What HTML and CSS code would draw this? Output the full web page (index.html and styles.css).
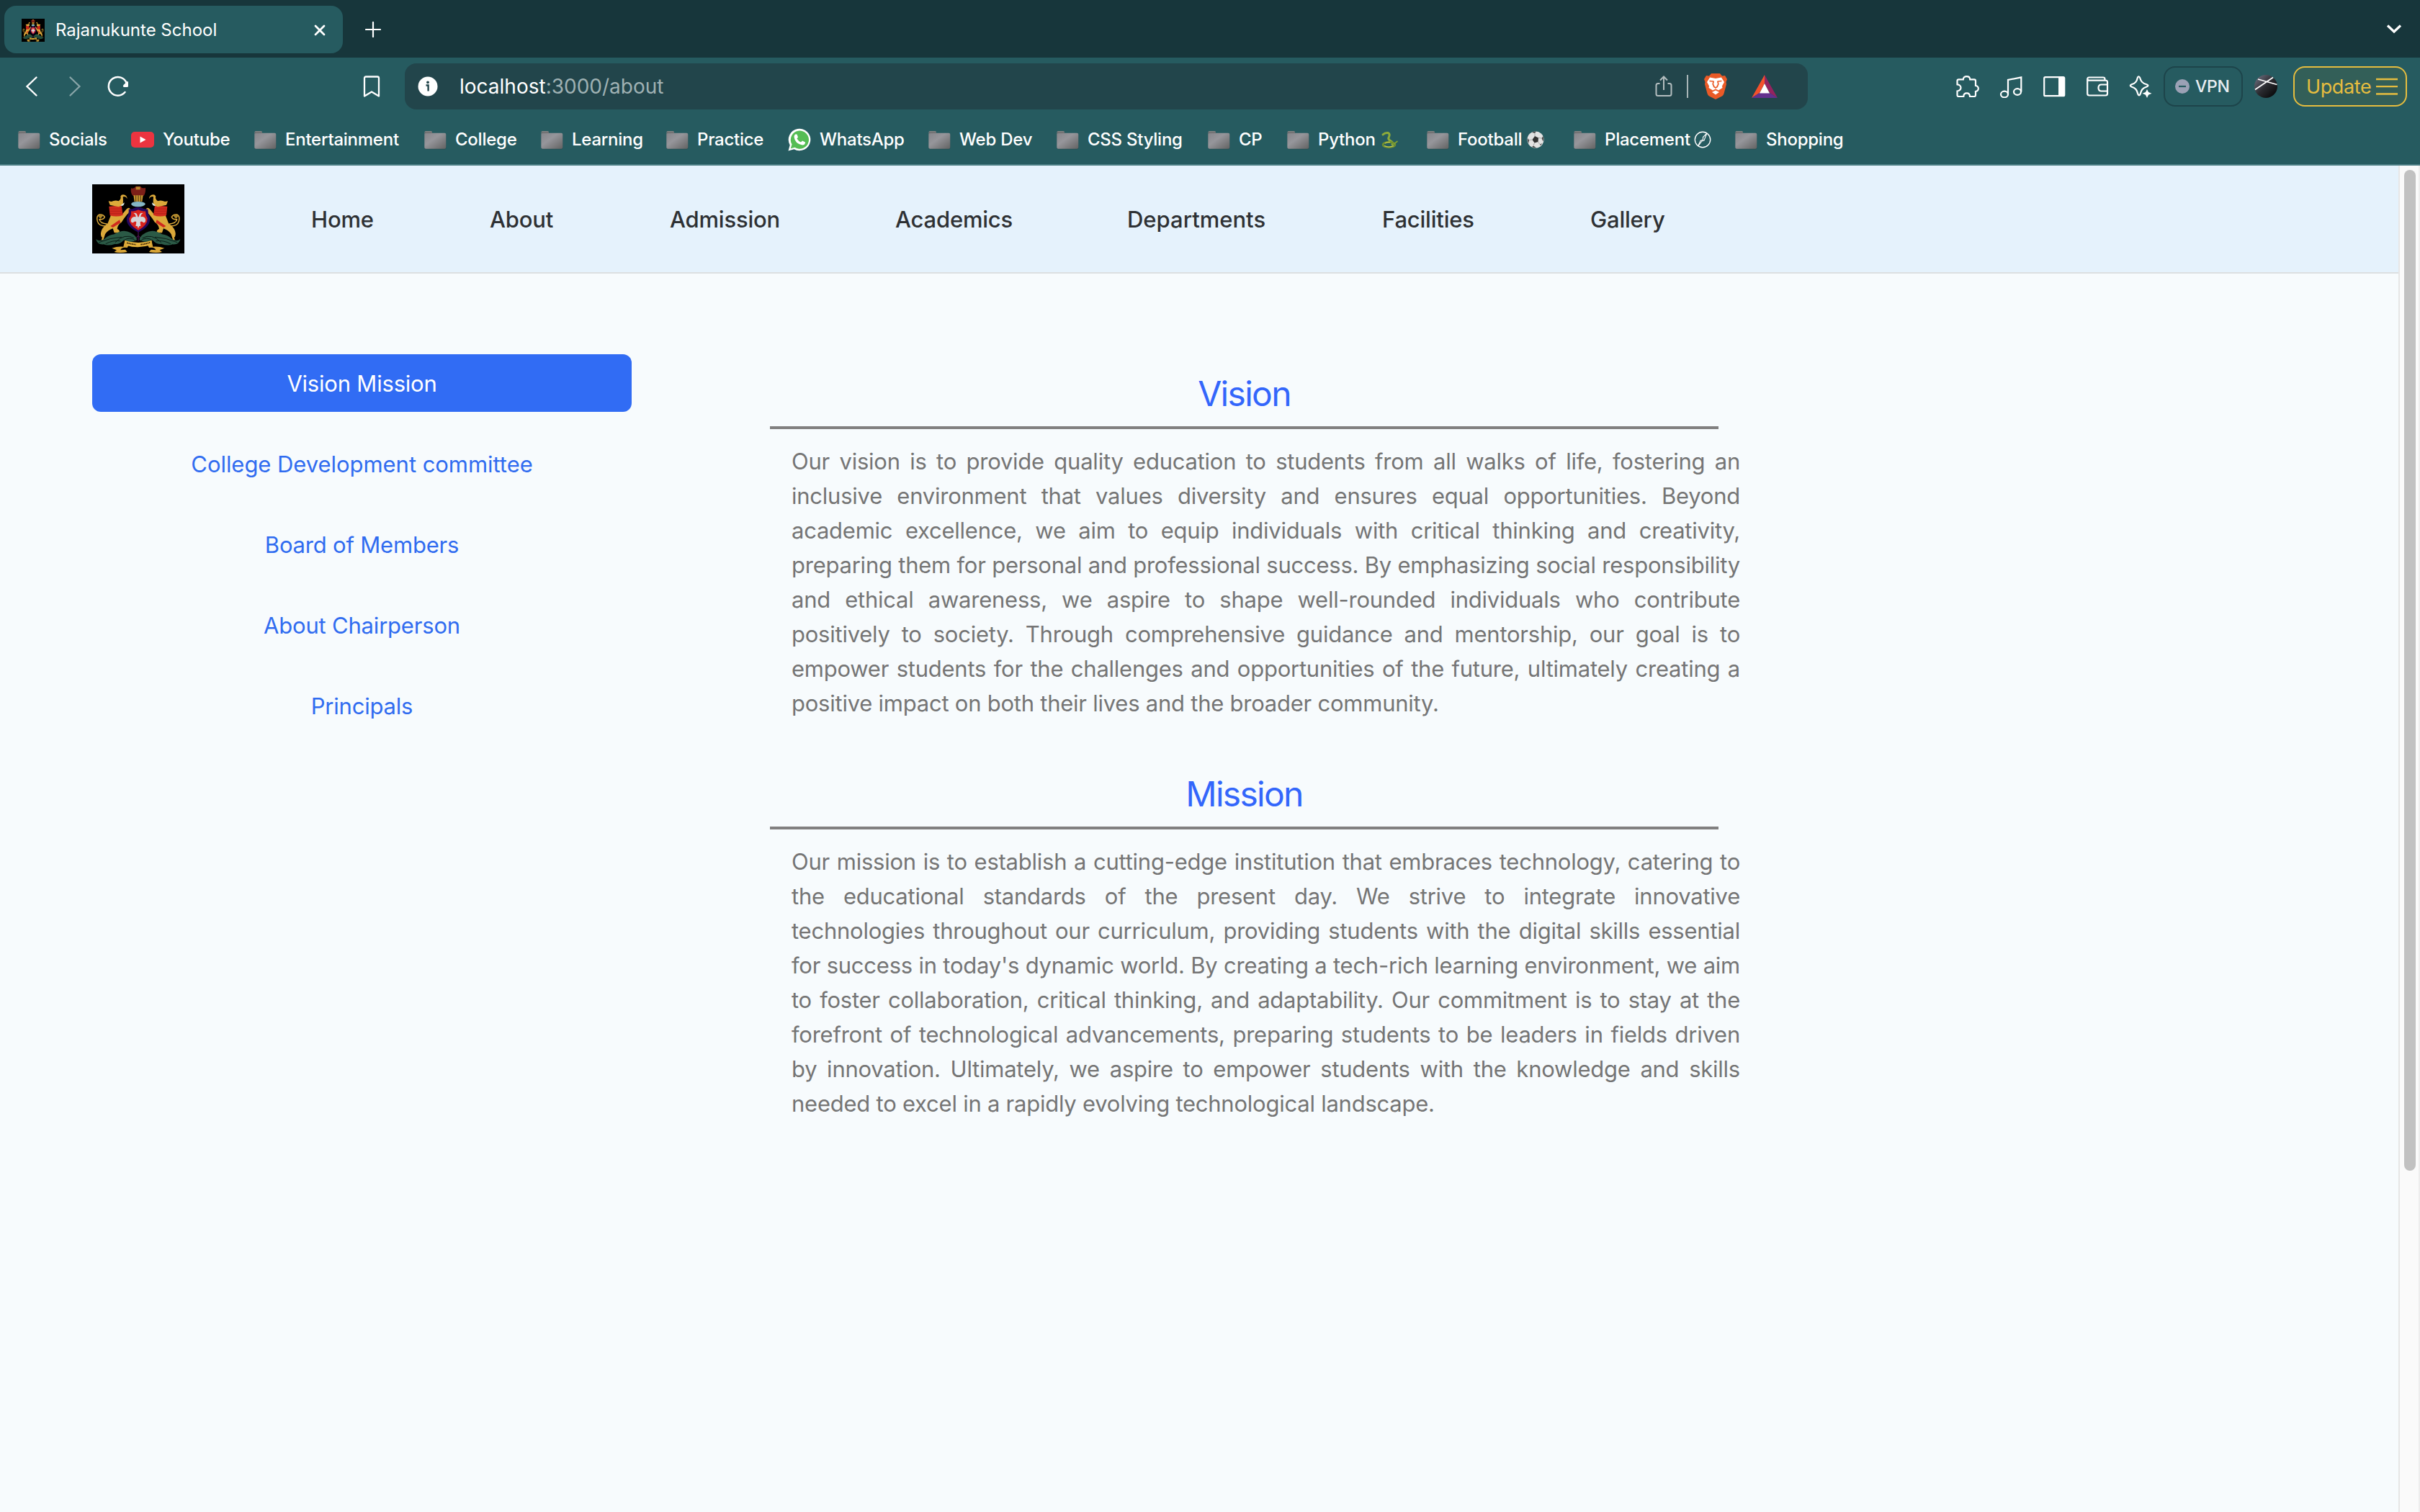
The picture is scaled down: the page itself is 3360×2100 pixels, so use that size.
FILE: index.html
```html
<!DOCTYPE html>
<html lang="en">
<head>
<meta charset="utf-8">
<title>Rajanukunte School</title>
<link rel="stylesheet" href="styles.css">
</head>
<body>
<svg class="defs" width="0" height="0">
  <defs>
    <linearGradient id="folderFill" x1="0" y1="0" x2="1" y2="1">
      <stop offset="0" stop-color="#86868b"/><stop offset=".4" stop-color="#96969b"/><stop offset="1" stop-color="#626262"/>
    </linearGradient>
    <linearGradient id="avatarFill" x1="0" y1="0" x2="1" y2="1">
      <stop offset="0" stop-color="#77788a"/><stop offset=".5" stop-color="#2a2b30"/><stop offset="1" stop-color="#000"/>
    </linearGradient>
    <symbol id="folder" viewBox="0 0 32 32">
      <path d="M1.5 9V5.5Q1.5 4 3 4H10.500Q12 4 12 5.500V9Z" fill="#7f7f80"/>
      <path d="M2 6H12V8H2Z" fill="#5c5c5c"/>
      <rect x="1.300" y="7" width="30" height="22.500" rx="2" fill="#1f4c50"/>
      <rect x="1.300" y="6.800" width="30" height="22" rx="2" fill="url(#folderFill)"/>
    </symbol>
    <symbol id="beast" viewBox="54 48 384 288" overflow="visible">
      <path d="M96 270Q86 262 92 242Q98 224 118 212L132 176L180 172L196 152Q206 142 212 150L214 158Q200 172 188 188L176 206Q160 216 158 234Q172 240 166 250H146L140 232Q118 240 108 256Q104 270 100 280H92Z" fill="#dca93a"/>
      <path d="M124 140L176 136L182 176Q158 186 128 178Z" fill="#cf2a1e"/>
      <path d="M127 150H178M128 160H180M129 170H181" stroke="#a31a14" stroke-width="1.500"/>
      <path d="M122 118L134 120Q150 112 164 118Q176 108 172 98Q176 88 190 92Q200 98 200 108Q194 96 182 100Q184 118 182 134L164 142L128 134Z" fill="#dca93a"/>
      <path d="M172 136L188 124Q188 136 178 138Z" fill="#d9e6e6"/>
      <path d="M130 222L168 196L172 208L140 228Z" fill="#cf2a1e"/>
      <path d="M118 222Q82 224 76 202Q70 180 84 174Q100 172 106 184Q102 196 84 194Q86 210 118 214" fill="none" stroke="#dca93a" stroke-width="4.500"/>
      <path d="M78 180Q88 170 100 178L88 192Z" fill="#a8842c"/>
      <path d="M70 276Q84 290 104 276Q124 258 146 256Q184 232 214 250Q240 264 240 280Q214 296 186 280Q168 300 150 296Q120 306 102 298Q74 300 70 276Z" fill="#2b5a46"/>
      <path d="M82 290Q130 270 176 268M150 290Q190 250 228 272M110 296Q140 280 172 284M184 284Q210 262 236 284" fill="none" stroke="#0b1d17" stroke-width="3"/>
      <path d="M190 282L212 290L200 312Q176 308 172 322L192 320L200 330Q168 336 146 330L156 322L136 314Q158 306 184 308Z" fill="#d9a637"/>
    </symbol>
    <symbol id="emblem" viewBox="54 48 384 288" preserveAspectRatio="none">
      <rect x="54" y="48" width="384" height="288" fill="#000"/>
      <use href="#beast" x="54" y="48" width="384" height="288"/>
      <g transform="translate(491 0) scale(-1 1)"><use href="#beast" x="54" y="48" width="384" height="288"/></g>
      <path d="M216 64Q228 68 236 56H254Q262 68 276 62Q278 84 268 96H224Q212 84 216 64Z" fill="#7c1f18"/>
      <path d="M236 58H254V70H236Z" fill="#b8862c"/>
      <path d="M226 94H266L262 120H230Z" fill="#c9952f"/>
      <path d="M236 94V120M246 94V120M256 94V120" stroke="#2a1c08" stroke-width="2.500"/>
      <path d="M216 130Q220 120 245 120T276 130Q270 142 245 142T216 130Z" fill="#86b7c6"/>
      <path d="M206 152Q224 152 236 144H256Q268 152 286 152Q286 172 294 186Q300 222 246 248Q192 222 198 186Q208 172 206 152Z" fill="#24075c"/>
      <path d="M216 160Q232 162 246 154Q260 162 276 160Q276 178 284 190Q286 218 246 240Q206 218 208 190Q218 178 216 160Z" fill="#d8231d"/>
      <path d="M226 168Q240 164 243 180L246 186L249 180Q252 164 266 168Q256 174 256 184Q272 180 276 194Q278 206 268 208Q258 198 254 206L256 222H250L246 232L242 222H235L238 206Q234 198 224 208Q212 206 216 194Q222 180 236 184Q236 174 226 168Z" fill="#d5d5d8"/>
      <path d="M246 246V284M238 270L246 262L254 270" stroke="#5a1260" stroke-width="3" fill="none"/>
      <path d="M190 282Q246 300 302 282L300 300Q246 318 196 302Z" fill="#e3b13c"/>
      <path d="M198 292Q222 298 236 299M256 299Q280 296 296 290" stroke="#3a2408" stroke-width="5" stroke-dasharray="5 2" fill="none"/>
    </symbol>
  </defs>
</svg>

<div class="browser">
  <div class="tab-strip">
    <div class="tab">
      <svg class="favicon"><use href="#emblem"/></svg>
      <span class="tab-title">Rajanukunte School</span>
      <svg class="tab-close" viewBox="0 0 16 16"><path d="M2 2L14 14M14 2L2 14" stroke="#fff" stroke-width="2.800" stroke-linecap="round"/></svg>
    </div>
    <svg class="new-tab" viewBox="0 0 22 22"><path d="M11 1V21M1 11H21" stroke="#fff" stroke-width="2.200" stroke-linecap="round"/></svg>
    <svg class="tab-menu" viewBox="0 0 24 16"><path d="M3 3.500L12 12L21 3.500" fill="none" stroke="#fff" stroke-width="3.200"/></svg>
  </div>

  <div class="toolbar">
    <svg class="icon" viewBox="0 0 32 32"><path d="M22.500 3.500L9.500 16L22.500 28.500" fill="none" stroke="#fff" stroke-width="2.400" stroke-linecap="round"/></svg>
    <svg class="icon" viewBox="0 0 32 32"><path d="M9.500 3.500L22.500 16L9.500 28.500" fill="none" stroke="#8aa6a9" stroke-width="2.200" stroke-linecap="round"/></svg>
    <svg class="icon" viewBox="0 0 32 32"><path d="M25.500 24A12.800 12.800 0 1 1 27.500 11" fill="none" stroke="#fff" stroke-width="2.500" stroke-linecap="round"/><path d="M30 10V15.500Q30 17 28.500 17H24Q22 16 23.500 14L28 9.500Q29.500 8.500 30 10Z" fill="#fff"/></svg>
    <svg class="icon bookmark-page" viewBox="0 0 32 32"><path d="M6 4.500Q6 2.500 8 2.500H24Q26 2.500 26 4.500V29.500L16 23.500L6 29.500Z" fill="none" stroke="#fff" stroke-width="2.300" stroke-linejoin="round"/></svg>
    <div class="address">
      <svg class="info" viewBox="0 0 28 28"><circle cx="14" cy="14" r="13.500" fill="#fff"/><circle cx="14" cy="8.300" r="1.900" fill="#22454b"/><path d="M11.500 12.500H14.600V20.500" fill="none" stroke="#22454b" stroke-width="2.400"/></svg>
      <span class="url"><b>localhost</b>:3000/about</span>
      <svg class="icon share" viewBox="0 0 32 32"><path d="M10.500 12H8Q5.500 12 5.500 14.500V26.500Q5.500 29 8 29H24Q26.500 29 26.500 26.500V14.500Q26.500 12 24 12H21.500M16 21V2.500M11 7.500L16 2.500L21 7.500" fill="none" stroke="#b3bdbf" stroke-width="2"/></svg>
      <span class="divider"></span>
      <svg class="brave" viewBox="0 0 32 36"><path d="M10 0H22L25 3.500L29 3L32 8L30.500 12L31 15L27.500 28Q27 30 25 31.500L16 36L7 31.500Q5 30 4.500 28L1 15L1.500 12L0 8L3 3L7 3.500Z" fill="#ea5a27"/><path d="M8 5.500L16 7L24 5.500L28 12L25 17.500L25.500 20L20 23.500L16 21.500L12 23.500L6.500 20L7 17.500L4 12Z" fill="#fff"/><path d="M7.500 10.500L13 11M24.500 10.500L19 11M13.200 10.500L12.200 15L14 18.500M18.800 10.500L19.800 15L18 18.500M13 18L16 20L19 18" fill="none" stroke="#ea5a27" stroke-width="1.700"/><path d="M11 26L16 23.500L21 26L16 29.500Z" fill="#fff"/></svg>
      <svg class="rewards" viewBox="0 0 36 32"><path d="M18 0L0 32L11 25L18 12Z" fill="#f4512c"/><path d="M18 0L36 32L25 25L18 12Z" fill="#94235f"/><path d="M0 32H36L25 25H11Z" fill="#63308e"/><path d="M18 12L25 25.500H11Z" fill="#fff"/></svg>
    </div>
    <div class="extensions">
      <svg class="icon" viewBox="0 0 32 32"><path d="M3.500 6.300H9.800C9.800 3.200 12 2.200 14.500 2.200S19.200 3.200 19.200 6.300H25Q27 6.300 27 8.300V15C30 15.500 30.800 17.500 30.800 19S29.500 22.500 27 23V28Q27 30 25 30H19C19 26.500 17 25.300 14.700 25.300S10.300 26.500 10.300 30H3.500Q1.500 30 1.500 28V22.500C4.500 22 6.500 20 6.500 17.800S4.500 13.500 1.500 13.300V8.300Q1.500 6.300 3.500 6.300Z" fill="none" stroke="#fff" stroke-width="2.200"/></svg>
      <svg class="icon" viewBox="0 0 32 32"><g fill="none" stroke="#fff" stroke-width="2.200"><ellipse cx="7" cy="27" rx="5" ry="4.300"/><ellipse cx="25" cy="23.500" rx="5" ry="4.300"/><path d="M12 27V7L30.300 3.300V23.500"/></g></svg>
      <svg class="icon" viewBox="0 0 32 32"><rect x="2.200" y="3.200" width="28" height="26" rx="1.500" fill="none" stroke="#fff" stroke-width="2.200"/><path d="M22 3H30.500V29.500H22Z" fill="#fff"/></svg>
      <svg class="icon" viewBox="0 0 32 32"><g fill="none" stroke="#fff" stroke-width="2.200"><path d="M26.500 8V6Q26.500 3.500 24 3.500H4.500Q2.200 3.500 2.200 6V26Q2.200 28.500 4.700 28.500H27.500Q30 28.500 30 26V10Q30 7.700 27.500 7.700H4.500Q2.200 7.700 2.200 5.500"/><path d="M30 13.500H21.500Q17.500 13.500 17.500 18T21.500 22.500H30"/></g></svg>
      <svg class="icon" viewBox="0 0 32 32"><path d="M12 3.500Q13.200 1 14.900 3.500C16.500 8.500 18 11.500 24.500 13.300Q28.500 14.800 24.500 16.500C18.500 18.500 17 21 15.500 27Q14 30 12.500 27C11 21 9.500 18.500 3.500 16.500Q0 14.800 3.500 13.300C9.500 11.500 10.800 8.500 12 3.500Z" fill="none" stroke="#fff" stroke-width="2.200"/><path d="M25 20L27 24L31.500 25.800L27 27.700L25 32L23 27.700L18.500 25.800L23 24Z" fill="#fff"/></svg>
    </div>
    <div class="vpn">
      <svg class="vpn-dot" viewBox="0 0 20 20"><circle cx="10" cy="10" r="10" fill="#9ba1b5"/><path d="M5 10H15" stroke="#265b60" stroke-width="2.200"/></svg>
      <span>VPN</span>
    </div>
    <svg class="avatar" viewBox="0 0 32 32"><circle cx="16" cy="16" r="16" fill="url(#avatarFill)"/><path d="M5 6L31.500 13.500M1 20.500L26 3.500" stroke="#fff" stroke-width="1.700"/></svg>
    <div class="update">
      <span>Update</span>
      <svg class="burger" viewBox="0 0 30 24"><path d="M0 2H30M0 12.200H30M0 22.500H30" stroke="#e6bd3f" stroke-width="2.300"/></svg>
    </div>
  </div>

  <div class="bookmarks">
    <a class="bookmark"><svg class="icon"><use href="#folder"/></svg>Socials</a>
    <a class="bookmark"><svg class="icon" viewBox="0 0 32 32"><rect y="5" width="32" height="22" rx="5" fill="#ec3440"/><path d="M12.500 11.500L20.500 16L12.500 20.500Z" fill="#fff"/></svg>Youtube</a>
    <a class="bookmark"><svg class="icon"><use href="#folder"/></svg>Entertainment</a>
    <a class="bookmark"><svg class="icon"><use href="#folder"/></svg>College</a>
    <a class="bookmark"><svg class="icon"><use href="#folder"/></svg>Learning</a>
    <a class="bookmark"><svg class="icon"><use href="#folder"/></svg>Practice</a>
    <a class="bookmark"><svg class="icon" viewBox="0 0 32 32"><path d="M0.500 31.500L2.700 23.500A15.300 15.300 0 1 1 8.500 29.300Z" fill="#fff"/><path d="M3.800 28.200L5.500 22.500A12.600 12.600 0 1 1 9.500 26.700Z" fill="#55bd54"/><path d="M10 8.500H12.500L14 12.500L12.500 14.500Q14.500 18 18 19.500L20 17.500L24 19.500Q24 23.500 20 23.500Q9.500 21.500 8.500 12Q8.500 10 10 8.500Z" fill="#fff"/></svg>WhatsApp</a>
    <a class="bookmark"><svg class="icon"><use href="#folder"/></svg>Web Dev</a>
    <a class="bookmark"><svg class="icon"><use href="#folder"/></svg>CSS Styling</a>
    <a class="bookmark"><svg class="icon"><use href="#folder"/></svg>CP</a>
    <a class="bookmark"><svg class="icon"><use href="#folder"/></svg>Python
      <svg class="emoji" viewBox="0 0 24 24"><path d="M3 5Q6 2 10 2.500Q13.500 4 11.500 8Q9.500 11.500 13.500 13.500Q18 16 16 18.500" fill="none" stroke="#8dab3a" stroke-width="3" stroke-linecap="round"/><ellipse cx="11.500" cy="19" rx="8.500" ry="3.600" fill="none" stroke="#6f8f30" stroke-width="2.600"/><path d="M17 19L23.500 14" stroke="#7d9f35" stroke-width="1.800"/><path d="M5 20.500Q11 23.500 18 20.500M6 17Q9 15 13 15.500" stroke="#c9cc50" stroke-width="1.200" fill="none"/></svg></a>
    <a class="bookmark"><svg class="icon"><use href="#folder"/></svg>Football
      <svg class="emoji" viewBox="0 0 24 24"><circle cx="12" cy="12" r="11.500" fill="#e2e2e2"/><path d="M11 7L16 9.500L15.500 15L10.500 16.500L7.500 12Z" fill="#333"/><path d="M7 2L11 3L13 .6Q9.500 .2 7 2ZM1 10L3 12.500L2.500 17Q.3 13.500 1 10ZM22.500 7L20.500 10L22.500 14.500Q24 10.500 22.500 7ZM7 22L9 20.500L13 23.300Q9.500 23.600 7 22ZM19 20.500L18 18.500L21 17Z" fill="#4a4a4a"/><path d="M11 3V7M3 12.500L7.500 12M20.500 10L16 9.500M9 20.500L10.500 16.500M18 18.500L15.500 15" stroke="#999" stroke-width=".8"/></svg></a>
    <a class="bookmark"><svg class="icon"><use href="#folder"/></svg>Placement
      <svg class="emoji placement-mark" viewBox="0 0 24 24"><circle cx="12" cy="12" r="10.700" fill="none" stroke="#fff" stroke-width="1.400"/><path d="M18 3L12.500 8.500V12L9 13.500L5.500 21M17.500 4L14 13L11 14L6 20.500" fill="none" stroke="#fff" stroke-width="1.100"/></svg></a>
    <a class="bookmark"><svg class="icon"><use href="#folder"/></svg>Shopping</a>
  </div>
</div>

<div class="viewport">
  <div class="page">
    <header class="navbar">
      <svg class="logo"><use href="#emblem"/></svg>
      <nav class="menu">
        <a>Home</a><a>About</a><a>Admission</a><a>Academics</a><a class="wide">Departments</a><a>Facilities</a><a>Gallery</a>
      </nav>
    </header>
    <main class="content">
      <aside class="pills">
        <a class="pill active">Vision Mission</a>
        <a class="pill wide">College Development committee</a>
        <a class="pill">Board of Members</a>
        <a class="pill">About Chairperson</a>
        <a class="pill">Principals</a>
      </aside>
      <div class="articles">
        <section class="article">
          <h2>Vision</h2>
          <p>Our vision is to provide quality education to students from all walks of life, fostering an inclusive environment that values diversity and ensures equal opportunities. Beyond academic excellence, we aim to equip individuals with critical thinking and creativity, preparing them for personal and professional success. By emphasizing social responsibility and ethical awareness, we aspire to shape well-rounded individuals who contribute positively to society. Through comprehensive guidance and mentorship, our goal is to empower students for the challenges and opportunities of the future, ultimately creating a positive impact on both their lives and the broader community.</p>
        </section>
        <section class="article">
          <h2>Mission</h2>
          <p>Our mission is to establish a cutting-edge institution that embraces technology, catering to the educational standards of the present day. We strive to integrate innovative technologies&nbsp;throughout our curriculum, providing students with the digital skills essential for success in today's dynamic world. By creating a tech-rich learning environment, we aim to foster collaboration, critical thinking, and adaptability. Our commitment is to stay at the forefront of technological advancements, preparing students to be leaders in fields driven by innovation. Ultimately, we aspire to empower students with the knowledge and skills needed to excel in a rapidly evolving technological landscape.</p>
        </section>
      </div>
    </main>
  </div>
  <div class="scrollbar"><div class="thumb"></div></div>
</div>
</body>
</html>
```
FILE: styles.css
```css
* { box-sizing: border-box; }
body {
  margin: 0;
  height: 2100px;
  display: flex;
  flex-direction: column;
  font-family: Inter, "Liberation Sans", sans-serif;
  background: #f7fbfd;
  overflow: hidden;
}
svg { display: block; flex: none; }
.defs { position: absolute; }
.icon { width: 32px; height: 32px; }

/* Browser chrome */
.browser {
  flex: none;
  height: 230px;
  background: #265b60;
  border-bottom: 2px solid #4c7f85;
  color: #fff;
}
.tab-strip {
  height: 80px;
  background: #17363b;
  display: flex;
  align-items: flex-start;
  padding: 8px 24px 0 6px;
}
.tab {
  width: 470px;
  height: 66px;
  border-radius: 16px;
  background: #265b60;
  display: flex;
  align-items: center;
  padding: 1px 24px 0;
}
.favicon { width: 32px; height: 32px; }
.tab-title { flex: 1; margin-left: 15px; font-size: 24px; }
.tab-close { width: 16px; height: 16px; }
.new-tab { width: 22px; height: 22px; margin: 22px 0 0 31px; }
.tab-menu { width: 24px; height: 16px; margin: 24px 0 0 auto; }

.toolbar {
  height: 80px;
  display: flex;
  align-items: center;
  gap: 28px;
  padding: 0 18px 0 28px;
}
.bookmark-page { margin-left: 292px; }
.address {
  width: 1948px;
  height: 64px;
  margin-left: 2px;
  border-radius: 16px;
  background: #22454b;
  display: flex;
  align-items: center;
  padding: 0 42px 0 18px;
}
.info { width: 28px; height: 28px; }
.url { flex: 1; margin-left: 30px; font-size: 28px; color: #9fb1b3; }
.url b { font-weight: 400; color: #fff; }
.divider { width: 2px; height: 32px; margin: 0 22px 0 16px; background: #a9b6b8; }
.brave { width: 32px; height: 36px; margin-right: 34px; }
.rewards { width: 36px; height: 32px; }
.extensions { display: flex; gap: 28px; margin-left: 178px; }
.vpn {
  width: 110px;
  height: 56px;
  margin-left: -12px;
  border: 2px solid #1d444a;
  border-radius: 16px;
  display: flex;
  align-items: center;
  gap: 8px;
  padding-left: 14px;
  font-size: 23px;
  font-weight: 500;
  letter-spacing: -.3px;
  color: #e8edf2;
}
.vpn-dot { width: 20px; height: 20px; }
.avatar { width: 32px; height: 32px; margin-left: -12px; }
.update {
  width: 158px;
  height: 56px;
  margin-left: -6px;
  border: 2px solid #e6bd3f;
  border-radius: 16px;
  background: #335f58;
  display: flex;
  align-items: center;
  justify-content: space-between;
  padding: 0 11px 0 16px;
  font-size: 27px;
  letter-spacing: -.4px;
  color: #e6bd3f;
}
.burger { width: 30px; height: 24px; }

.bookmarks {
  height: 67px;
  padding-left: 24px;
  display: grid;
  grid-template-columns: 158px 170px 236px 162px 174px 170px 194px 178px 210px 110px 194px 204px 224px 200px;
  align-items: center;
}
.bookmark {
  display: flex;
  align-items: center;
  font-size: 24px;
  font-weight: 500;
  letter-spacing: -.25px;
  white-space: nowrap;
}
.bookmark .icon { margin-right: 12px; }
.emoji { width: 24px; height: 24px; margin-left: 7px; }
.placement-mark { margin-left: 5px; }

/* Page */
.viewport { flex: 1; display: flex; min-height: 0; }
.page { flex: 1; }
.navbar {
  height: 150px;
  background: #e5f2fc;
  border-bottom: 2px solid #dcdfe1;
  display: flex;
  align-items: center;
  padding-left: 128px;
}
.logo { width: 128px; height: 96px; }
.menu {
  margin-left: 176px;
  padding-top: 2px;
  display: grid;
  grid-template-columns: 248px 250px 313px 322px 354px 289px 150px;
  font-size: 31px;
  font-weight: 500;
  letter-spacing: -.2px;
  line-height: 48px;
  color: #2e3134;
}
.menu .wide { letter-spacing: 0; }

.content { display: flex; padding: 112px 0 0 128px; }
.pills { width: 749px; display: flex; flex-direction: column; gap: 32px; }
.pill {
  height: 80px;
  border-radius: 12px;
  font-size: 31px;
  letter-spacing: -.2px;
  line-height: 82px;
  text-align: center;
  color: #306cf0;
}
.pill.wide { letter-spacing: -.05px; }
.pill.active { background: #316cf4; color: #fff; }
.articles { margin-left: 192px; padding-top: 26px; display: flex; flex-direction: column; gap: 73px; }
.article h2 {
  width: 1317px;
  height: 78px;
  margin: 0;
  border-bottom: 4px solid #818080;
  font-size: 48px;
  font-weight: 400;
  letter-spacing: -1.7px;
  line-height: 58px;
  text-align: center;
  color: #3366fb;
}
.article p {
  width: 1317px;
  margin: 21px 0 0 30px;
  font-size: 31px;
  letter-spacing: -.24px;
  line-height: 48px;
  text-align: justify;
  color: #757575;
}

.scrollbar {
  width: 30px;
  background: #fafafa;
  border-left: 2px solid #e6e6e6;
  border-right: 2px solid #ededed;
  padding: 6px 4px 0 6px;
}
.thumb { width: 16px; height: 1390px; border-radius: 8px; background: #c1c1c1; }
```
